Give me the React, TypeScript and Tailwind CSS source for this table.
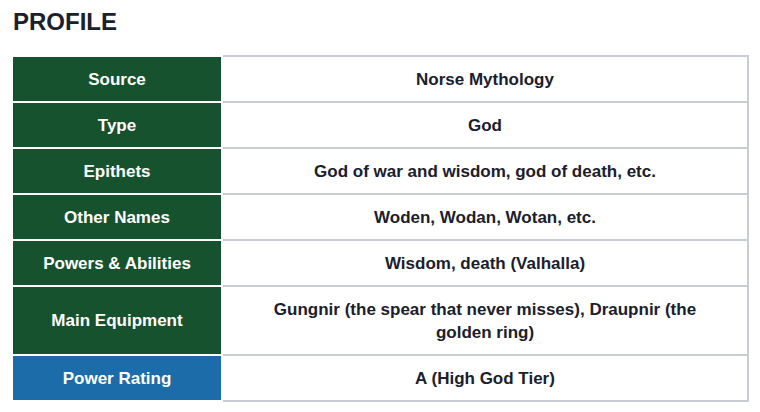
const rows: { label: string; value: string; highlight?: boolean }[] = [
  { label: "Source", value: "Norse Mythology" },
  { label: "Type", value: "God" },
  { label: "Epithets", value: "God of war and wisdom, god of death, etc." },
  { label: "Other Names", value: "Woden, Wodan, Wotan, etc." },
  { label: "Powers & Abilities", value: "Wisdom, death (Valhalla)" },
  { label: "Main Equipment", value: "Gungnir (the spear that never misses), Draupnir (the golden ring)" },
  { label: "Power Rating", value: "A (High God Tier)", highlight: true },
];

export default function App() {
  return (
    <div className="min-h-screen bg-white pl-[11px] font-['Liberation_Sans',Arial,sans-serif]">
      <h2 className="pl-[2px] pt-[6px] text-2xl leading-8 font-bold text-[#1a202c]">PROFILE</h2>

      <table className="mt-[17px] w-[738px] border-collapse text-[17px] leading-[23px] font-bold">
        <tbody>
          {rows.map((row) => (
            <tr key={row.label}>
              <th
                className={`w-[210px] border-2 border-white px-3 py-[10.5px] text-center text-white ${
                  row.highlight ? "bg-[#1c6caa]" : "bg-[#17522f]"
                }`}
              >
                {row.label}
              </th>
              <td className="border-2 border-[#c9ccd3] px-6 py-[10.5px] text-center text-[#1a202c]">
                {row.value}
              </td>
            </tr>
          ))}
        </tbody>
      </table>
    </div>
  );
}
